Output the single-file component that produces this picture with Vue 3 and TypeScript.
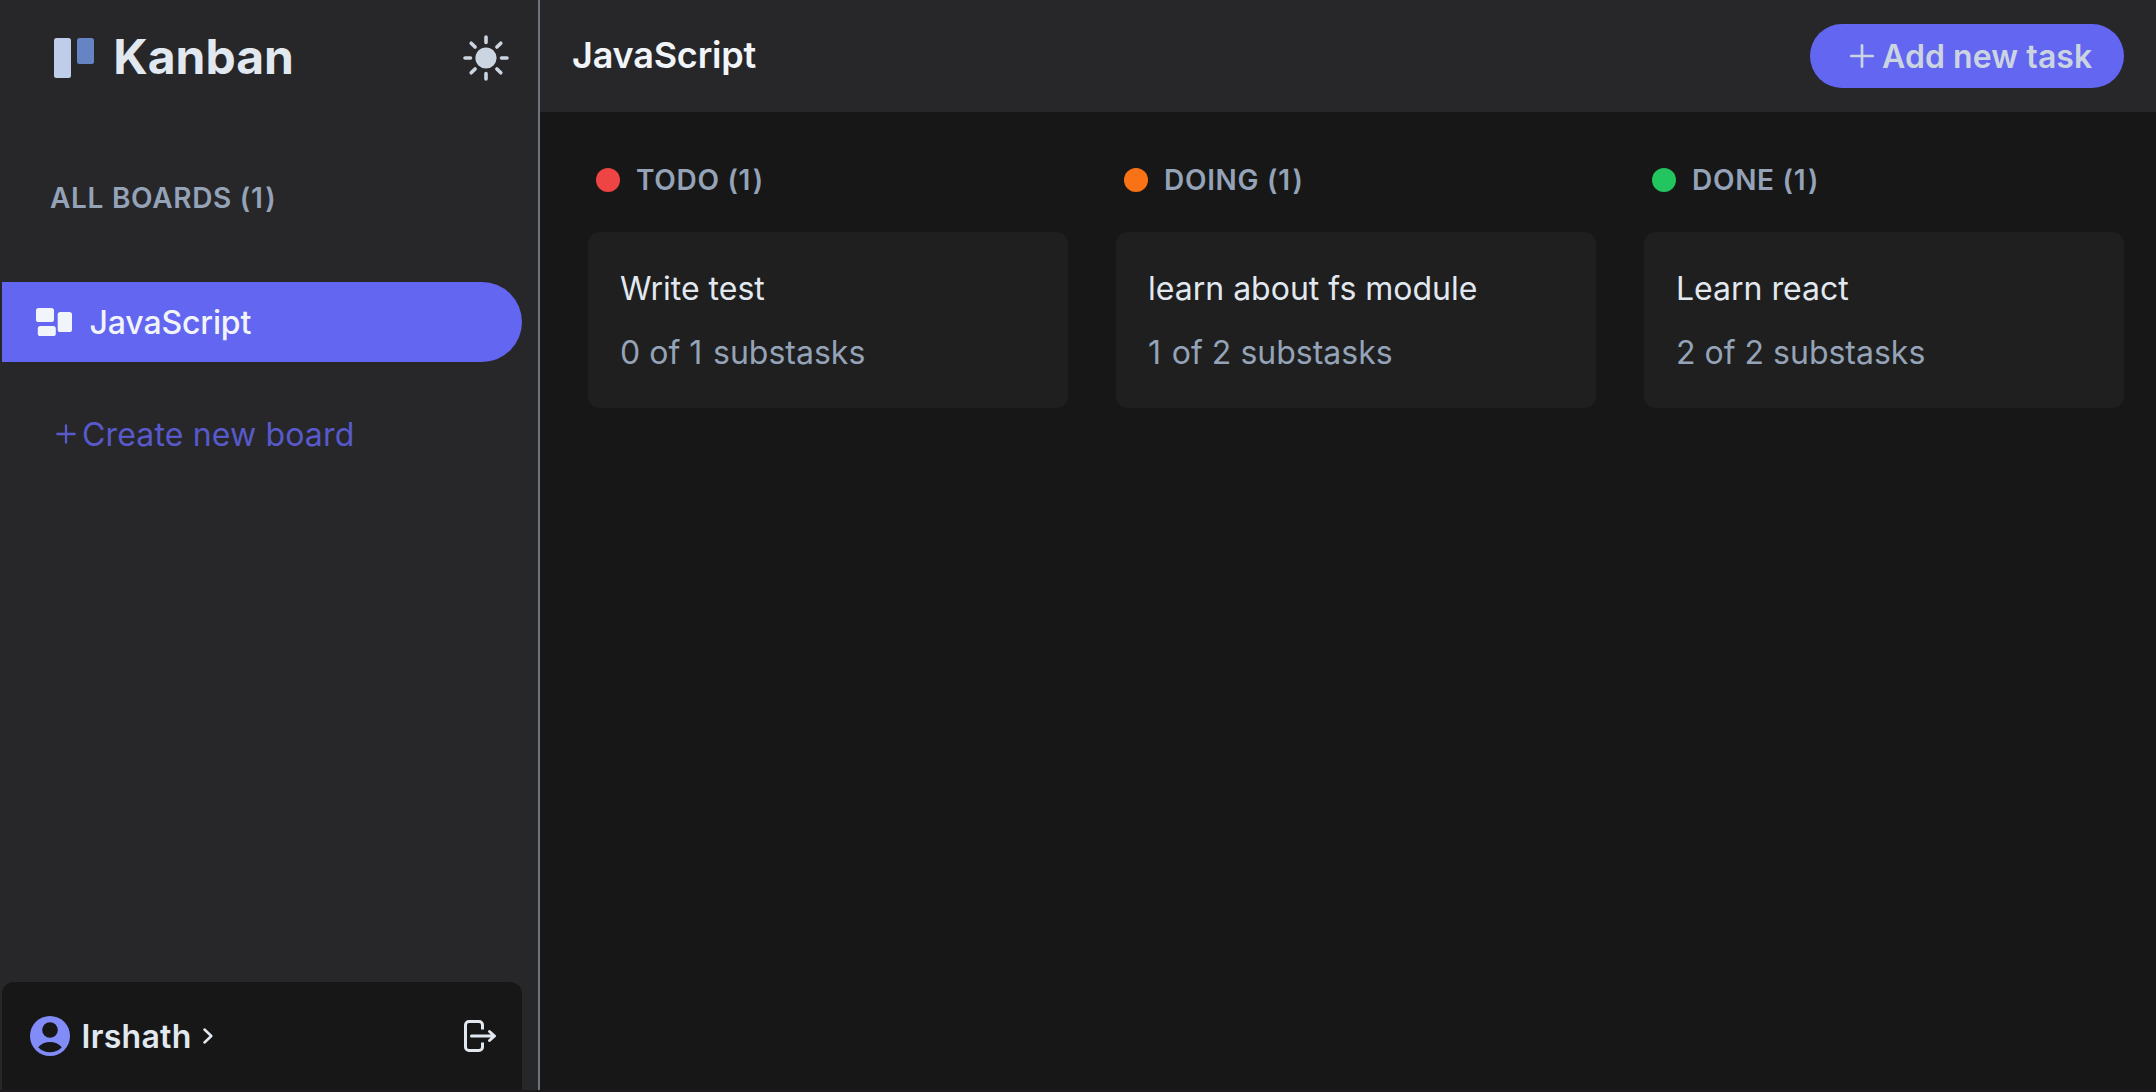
<script setup lang="ts">
interface Task {
  title: string
  done: number
  total: number
}
interface Column {
  name: string
  color: string
  tasks: Task[]
}

const boards: string[] = ['JavaScript']
const columns: Column[] = [
  { name: 'TODO', color: '#ef4444', tasks: [{ title: 'Write test', done: 0, total: 1 }] },
  { name: 'DOING', color: '#f97316', tasks: [{ title: 'learn about fs module', done: 1, total: 2 }] },
  { name: 'DONE', color: '#22c55e', tasks: [{ title: 'Learn react', done: 2, total: 2 }] },
]
</script>

<template>
  <div class="app">
    <aside class="sidebar">
      <div class="brand">
        <svg class="logo" width="40" height="40" viewBox="0 0 40 40">
          <rect width="17" height="40" rx="2.5" fill="#c0cdea" />
          <rect x="23" width="17" height="26" rx="2.5" fill="#6584c4" />
        </svg>
        <span class="brand-name">Kanban</span>
        <svg class="sun" width="48" height="48" viewBox="0 0 48 48">
          <circle cx="24" cy="24" r="10.6" fill="#cbd5e1" />
          <path
            d="M24 3v5.500M24 39.500v5.500M3 24h5.500M39.500 24h5.500M9.200 9.200l3.900 3.900M34.900 34.900l3.900 3.900M9.200 38.800l3.900-3.900M34.900 13.100l3.900-3.900"
            stroke="#cbd5e1" stroke-width="3.6" stroke-linecap="round" fill="none"
          />
        </svg>
      </div>
      <h2 class="boards-title">ALL BOARDS (<span :class="{ one: boards.length === 1 }">{{ boards.length }}</span>)</h2>
      <nav>
        <a v-for="board in boards" :key="board" class="board">
          <svg width="36" height="28" viewBox="0 0 36 28" fill="#f1f5f9">
            <rect width="18" height="14" rx="2.6" />
            <rect x="21.700" y="4" width="14.300" height="20" rx="2.600" />
            <rect x="1.800" y="18" width="18" height="10" rx="2.600" />
          </svg>
          <span class="board-name">{{ board }}</span>
        </a>
      </nav>
      <a class="create">
        <svg width="20" height="20" viewBox="0 0 20 20">
          <path d="M10 1.300v17.400M1.300 10h17.400" stroke="#585acb" stroke-width="2.300" stroke-linecap="round" />
        </svg>
        <span class="create-text">Create new board</span>
      </a>
      <footer class="user">
        <svg class="avatar" width="40" height="40" viewBox="0 0 40 40">
          <circle cx="20" cy="20" r="20" fill="#818cf8" />
          <circle cx="20" cy="14" r="7.800" fill="#171717" />
          <path d="M8.200 31.300C11 27.700 15.500 26 20 26s9 1.700 11.800 5.300C28.700 34.600 24.500 36.300 20 36.300S11.300 34.600 8.200 31.300z" fill="#171717" />
        </svg>
        <span class="user-name">Irshath</span>
        <svg class="chevron" width="10" height="16" viewBox="0 0 10 16">
          <path d="M1.500 1.500L8.300 8L1.500 14.500" fill="none" stroke="#e2e8f0" stroke-width="2.500" stroke-linecap="round" stroke-linejoin="round" />
        </svg>
        <svg class="logout" width="34" height="34" viewBox="0 0 34 34" fill="none" stroke="#e2e8f0" stroke-width="3" stroke-linecap="round" stroke-linejoin="round">
          <path d="M19.500 10.500V6a3.500 3.500 0 0 0-3.500-3.500H6A3.500 3.500 0 0 0 2.500 6v22A3.500 3.500 0 0 0 6 31.500h10a3.500 3.500 0 0 0 3.500-3.500v-4.500" stroke-linecap="butt" />
          <path d="M8.500 17h23M26.500 12.500l5 4.500l-5 4.500" />
        </svg>
      </footer>
    </aside>
    <main class="main">
      <header class="topbar">
        <h1 class="title">JavaScript</h1>
        <button class="add">
          <svg width="24" height="24" viewBox="0 0 24 24">
            <path d="M12 1.300v21.400M1.300 12h21.400" stroke="#cbd5e1" stroke-width="2.700" stroke-linecap="round" />
          </svg>
          <span class="add-text">Add new task</span>
        </button>
      </header>
      <div class="columns">
        <section v-for="col in columns" :key="col.name" class="column">
          <div class="column-head">
            <span class="dot" :style="{ background: col.color }"></span>
            <span class="column-name">{{ col.name }} (<span :class="{ one: col.tasks.length === 1 }">{{ col.tasks.length }}</span>)</span>
          </div>
          <article v-for="task in col.tasks" :key="task.title" class="card">
            <div class="task-title">{{ task.title }}</div>
            <div class="task-sub"><span :class="{ one: task.done === 1 }">{{ task.done }}</span> of <span :class="{ one: task.total === 1 }">{{ task.total }}</span> substasks</div>
            <div class="rule"></div>
          </article>
        </section>
      </div>
    </main>
  </div>
</template>

<style>
body {
  margin: 0;
  background: #171717;
}
</style>

<style scoped>
.app {
  box-sizing: border-box;
  display: flex;
  width: 2156px;
  height: 1092px;
  overflow: hidden;
  border-bottom: 2px solid #1f1a1d;
  background: #171717;
  font-family: Inter, sans-serif;
  white-space: nowrap;
}
.sidebar {
  box-sizing: border-box;
  width: 540px;
  flex: none;
  display: flex;
  flex-direction: column;
  padding: 0 16px 0 2px;
  background: #27272a;
  border-right: 2px solid #6b7280;
}
.brand {
  display: flex;
  align-items: center;
  height: 116px;
  padding: 0 12px 0 52px;
}
.brand-name {
  margin-left: 19.2px;
  padding-bottom: 2px;
  font-size: 48px;
  line-height: 64px;
  font-weight: 700;
  color: #e2e8f0;
}
.sun {
  margin-left: auto;
}
.boards-title {
  margin: 62px 0 0 48px;
  font-size: 28px;
  line-height: 40px;
  font-weight: 600;
  letter-spacing: 0.7px;
  color: #94a3b8;
}
/* the narrow "1" gets a little extra room after it */
.one {
  letter-spacing: 1.8px;
}
.boards-title .one,
.column-name .one {
  letter-spacing: 2.4px;
}
nav {
  margin-top: 64px;
}
.board {
  display: flex;
  align-items: center;
  height: 80px;
  padding-left: 34px;
  border-radius: 0 40px 40px 0;
  background: #6366f1;
}
.board-name {
  margin-left: 17.6px;
  padding-top: 2px;
  font-size: 32px;
  line-height: 48px;
  font-weight: 500;
  letter-spacing: -0.15px;
  color: #f1f5f9;
}
.create {
  display: flex;
  align-items: center;
  height: 48px;
  margin: 48px 0 0 54px;
}
.create-text {
  margin-left: 6px;
  font-size: 32px;
  font-weight: 400;
  letter-spacing: 0.15px;
  color: #585acb;
}
.user {
  display: flex;
  align-items: center;
  height: 108px;
  margin-top: auto;
  padding: 0 25px 0 28px;
  border-radius: 12px 12px 0 0;
  background: #171717;
}
.user-name {
  margin-left: 11.5px;
  font-size: 32px;
  font-weight: 600;
  letter-spacing: 0.3px;
  color: #e2e8f0;
}
.chevron {
  margin-left: 11px;
}
.logout {
  margin-left: auto;
}
.main {
  flex: 1;
  display: flex;
  flex-direction: column;
}
.topbar {
  display: flex;
  align-items: center;
  justify-content: space-between;
  height: 112px;
  padding: 0 32px;
  background: #27272a;
}
.title {
  margin: 0;
  padding-bottom: 2px;
  font-size: 36px;
  line-height: 56px;
  font-weight: 600;
  letter-spacing: -0.2px;
  color: #f1f5f9;
}
.add {
  box-sizing: border-box;
  display: flex;
  align-items: center;
  width: 314px;
  height: 64px;
  padding: 0 0 0 40px;
  border: 0;
  border-radius: 32px;
  background: #6366f1;
  font-family: inherit;
}
.add-text {
  margin-left: 8px;
  font-size: 32px;
  font-weight: 600;
  letter-spacing: 0.08px;
  color: #cbd5e1;
}
.columns {
  display: flex;
  gap: 48px;
  padding: 48px 32px 0 48px;
}
.column {
  flex: 1;
}
.column-head {
  display: flex;
  align-items: center;
  height: 40px;
  padding-left: 8px;
}
.dot {
  width: 24px;
  height: 24px;
  border-radius: 50%;
}
.column-name {
  margin-left: 16px;
  font-size: 28px;
  line-height: 40px;
  font-weight: 600;
  letter-spacing: 0.7px;
  color: #94a3b8;
}
.card {
  box-sizing: border-box;
  height: 176px;
  margin-top: 32px;
  padding: 33px 32px 0;
  border-radius: 12px;
  background: #1f1f1f;
}
.task-title {
  font-size: 32px;
  line-height: 48px;
  color: #e2e8f0;
}
.task-sub {
  margin-top: 16px;
  font-size: 32px;
  line-height: 48px;
  color: #94a3b8;
}
.rule {
  height: 1px;
  background: #1d1d1d;
}
</style>
